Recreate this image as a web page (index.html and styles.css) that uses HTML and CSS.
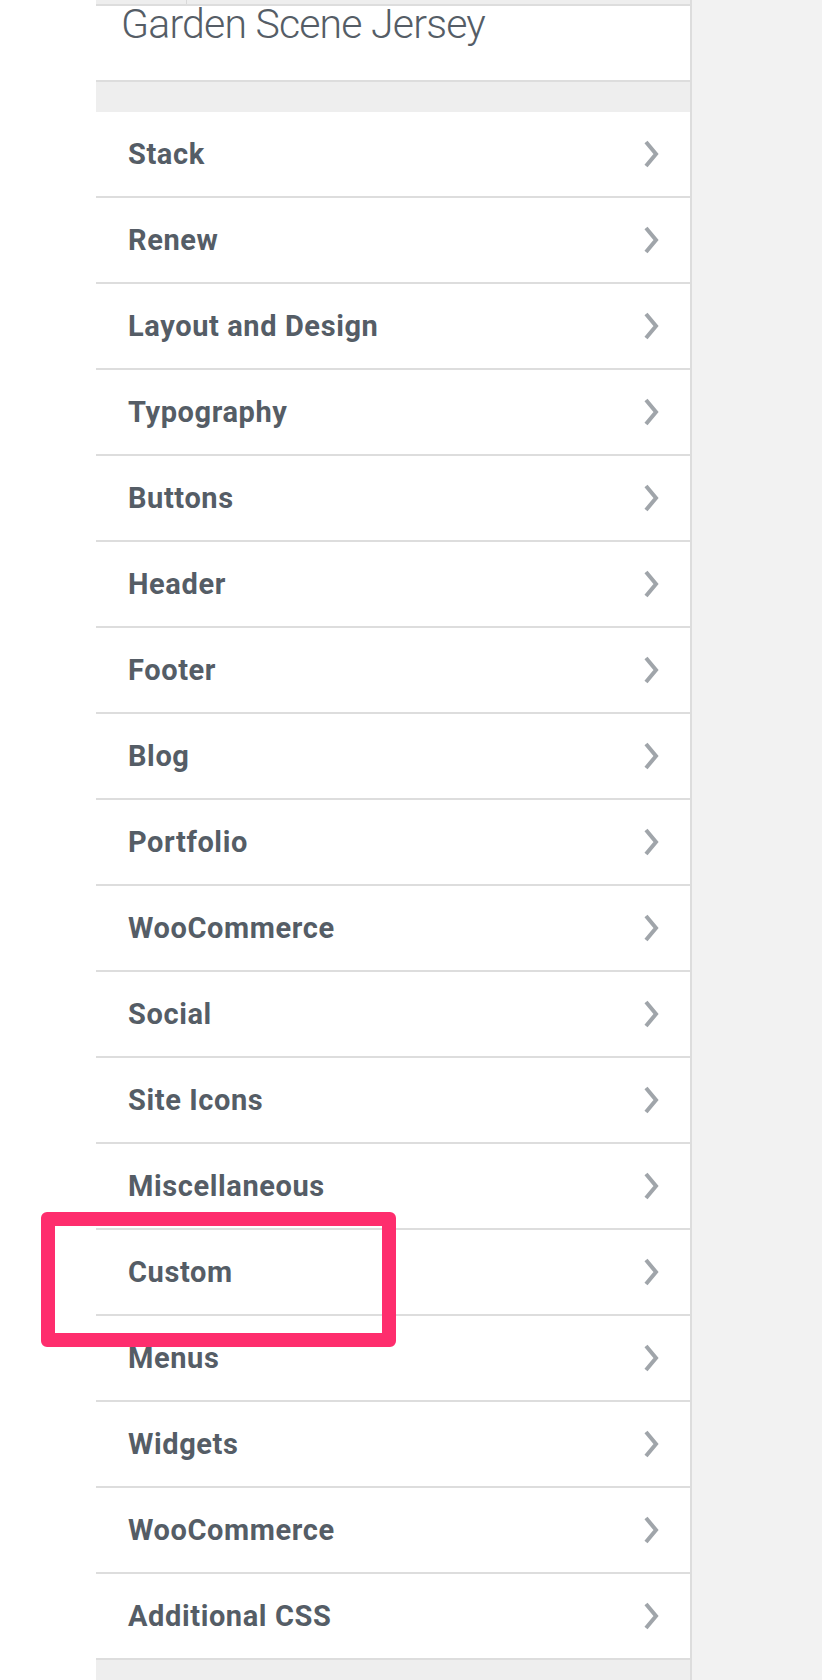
FILE: index.html
```html
<!DOCTYPE html>
<html lang="en">
<head>
<meta charset="utf-8">
<title>Customizer</title>
<link rel="stylesheet" href="styles.css">
</head>
<body>
<div class="page">
  <div class="left-gutter"></div>
  <div class="panel">
    <div class="top-strip">
      <div class="strip-cell strip-cell-first"></div>
      <div class="strip-cell"></div>
    </div>
    <div class="site-title">Garden Scene Jersey</div>
    <div class="band"></div>
    <ul class="sections">
      <li class="section"><span class="label">Stack</span><svg class="chev" viewBox="0 0 16 28" width="16" height="28"><polyline points="3,2 13,14 3,26"/></svg></li>
      <li class="section"><span class="label">Renew</span><svg class="chev" viewBox="0 0 16 28" width="16" height="28"><polyline points="3,2 13,14 3,26"/></svg></li>
      <li class="section"><span class="label">Layout and Design</span><svg class="chev" viewBox="0 0 16 28" width="16" height="28"><polyline points="3,2 13,14 3,26"/></svg></li>
      <li class="section"><span class="label">Typography</span><svg class="chev" viewBox="0 0 16 28" width="16" height="28"><polyline points="3,2 13,14 3,26"/></svg></li>
      <li class="section"><span class="label">Buttons</span><svg class="chev" viewBox="0 0 16 28" width="16" height="28"><polyline points="3,2 13,14 3,26"/></svg></li>
      <li class="section"><span class="label">Header</span><svg class="chev" viewBox="0 0 16 28" width="16" height="28"><polyline points="3,2 13,14 3,26"/></svg></li>
      <li class="section"><span class="label">Footer</span><svg class="chev" viewBox="0 0 16 28" width="16" height="28"><polyline points="3,2 13,14 3,26"/></svg></li>
      <li class="section"><span class="label">Blog</span><svg class="chev" viewBox="0 0 16 28" width="16" height="28"><polyline points="3,2 13,14 3,26"/></svg></li>
      <li class="section"><span class="label">Portfolio</span><svg class="chev" viewBox="0 0 16 28" width="16" height="28"><polyline points="3,2 13,14 3,26"/></svg></li>
      <li class="section"><span class="label">WooCommerce</span><svg class="chev" viewBox="0 0 16 28" width="16" height="28"><polyline points="3,2 13,14 3,26"/></svg></li>
      <li class="section"><span class="label">Social</span><svg class="chev" viewBox="0 0 16 28" width="16" height="28"><polyline points="3,2 13,14 3,26"/></svg></li>
      <li class="section"><span class="label">Site Icons</span><svg class="chev" viewBox="0 0 16 28" width="16" height="28"><polyline points="3,2 13,14 3,26"/></svg></li>
      <li class="section"><span class="label">Miscellaneous</span><svg class="chev" viewBox="0 0 16 28" width="16" height="28"><polyline points="3,2 13,14 3,26"/></svg></li>
      <li class="section"><span class="label">Custom</span><svg class="chev" viewBox="0 0 16 28" width="16" height="28"><polyline points="3,2 13,14 3,26"/></svg></li>
      <li class="section"><span class="label">Menus</span><svg class="chev" viewBox="0 0 16 28" width="16" height="28"><polyline points="3,2 13,14 3,26"/></svg></li>
      <li class="section"><span class="label">Widgets</span><svg class="chev" viewBox="0 0 16 28" width="16" height="28"><polyline points="3,2 13,14 3,26"/></svg></li>
      <li class="section"><span class="label">WooCommerce</span><svg class="chev" viewBox="0 0 16 28" width="16" height="28"><polyline points="3,2 13,14 3,26"/></svg></li>
      <li class="section"><span class="label">Additional CSS</span><svg class="chev" viewBox="0 0 16 28" width="16" height="28"><polyline points="3,2 13,14 3,26"/></svg></li>
    </ul>
    <div class="footer-band"></div>
  </div>
  <div class="preview"></div>
  <div class="highlight"></div>
</div>
</body>
</html>
```
FILE: styles.css
```css
* { box-sizing: border-box; }
html, body {
  margin: 0;
  padding: 0;
  background: #ffffff;
}
.page {
  position: relative;
  display: flex;
  width: 822px;
  height: 1680px;
  overflow: hidden;
  font-family: Roboto, "Liberation Sans", Arial, sans-serif;
}
.left-gutter {
  width: 96px;
  flex: none;
  background: #ffffff;
}
.panel {
  width: 596px;
  flex: none;
  display: flex;
  flex-direction: column;
  background: #ffffff;
  border-right: 2px solid #dddddd;
}
.top-strip {
  display: flex;
  height: 6px;
  background: #eeeeee;
  border-bottom: 2px solid #dddddd;
  flex: none;
}
.strip-cell {
  flex: 1;
}
.strip-cell-first {
  flex: none;
  width: 91px;
  border-right: 1px solid #d9d9d9;
}
.site-title {
  height: 76px;
  padding: 0 0 0 25px;
  font-size: 41px;
  line-height: 37px;
  letter-spacing: -0.8px;
  font-weight: 300;
  color: #555d66;
  border-bottom: 2px solid #dddddd;
  flex: none;
}
.band {
  height: 30px;
  background: #eeeeee;
  flex: none;
}
.sections {
  list-style: none;
  margin: 0;
  padding: 0;
}
.section {
  display: flex;
  align-items: center;
  justify-content: space-between;
  height: 86px;
  padding: 0 31px 0 32px;
  border-bottom: 2px solid #dddddd;
  background: #ffffff;
}
.label {
  font-size: 29px;
  font-weight: 700;
  letter-spacing: 0.6px;
  color: #555d66;
}
.chev {
  display: block;
  fill: none;
  stroke: #a0a5aa;
  stroke-width: 4;
  stroke-linecap: butt;
  stroke-linejoin: miter;
}
.footer-band {
  flex: 1;
  background: #eeeeee;
}
.preview {
  flex: 1;
  background: #f2f2f2;
}
.highlight {
  position: absolute;
  left: 41px;
  top: 1212px;
  width: 355px;
  height: 135px;
  border: 14px solid #fe2d6d;
  border-radius: 6px;
}
```
